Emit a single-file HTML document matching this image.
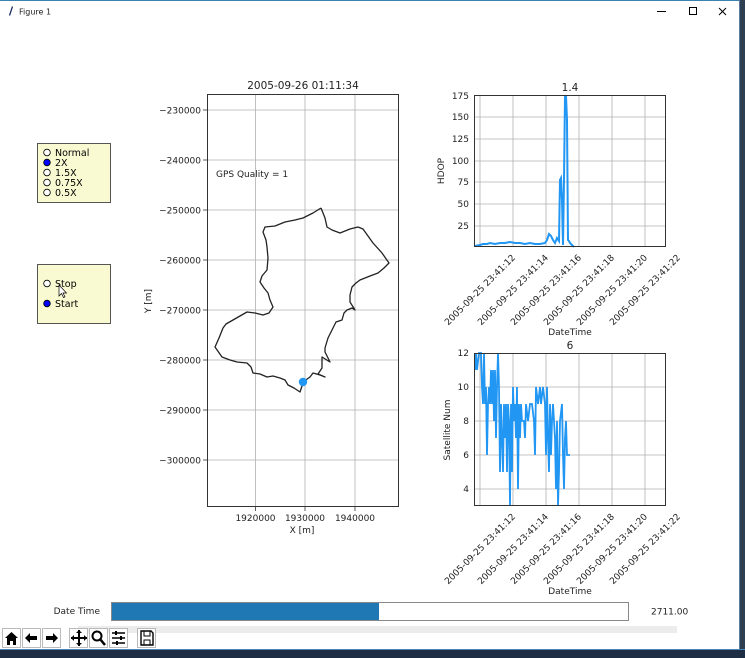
<!DOCTYPE html>
<html><head><meta charset="utf-8"><style>
html,body{margin:0;padding:0;background:#fff;width:745px;height:658px;overflow:hidden;font-family:"DejaVu Sans","Liberation Sans",sans-serif}
svg{position:absolute;left:0;top:0}
</style></head><body>
<svg width="745" height="658" viewBox="0 0 745 658" font-family="DejaVu Sans, Liberation Sans, sans-serif">
<rect x="0" y="0" width="745" height="658" fill="#fff"/>
<rect x="0" y="0" width="745" height="1" fill="#3c7fb1"/>
<rect x="739" y="0" width="6" height="658" fill="#2e3f52"/>
<rect x="739" y="0" width="1" height="658" fill="#5a7da0"/>
<rect x="0" y="649" width="745" height="9" fill="#1c2d44"/>
<rect x="0" y="649" width="745" height="1" fill="#4f86b8"/>
<path d="M9 15 L12 6 L13 7 L10 16 Z" fill="#1a2a60"/>
<text x="19" y="14.5" font-size="8" fill="#222">Figure 1</text>
<rect x="657" y="11" width="9" height="1" fill="#000"/>
<rect x="689.5" y="7.5" width="7" height="7" fill="none" stroke="#000" stroke-width="1"/>
<path d="M719 8 L726 15 M726 8 L719 15" stroke="#000" stroke-width="1"/>

<g font-size="9.5" fill="#000">
<rect x="37.5" y="143.5" width="73" height="59" fill="#fafad2" stroke="#555"/>
<circle cx="47" cy="152.5" r="3.3" fill="#fff" stroke="#000" stroke-width=".8"/><text x="55" y="156">Normal</text>
<circle cx="47" cy="162.5" r="3.3" fill="#0000ff" stroke="#000" stroke-width=".8"/><text x="55" y="166">2X</text>
<circle cx="47" cy="172.5" r="3.3" fill="#fff" stroke="#000" stroke-width=".8"/><text x="55" y="176">1.5X</text>
<circle cx="47" cy="182.5" r="3.3" fill="#fff" stroke="#000" stroke-width=".8"/><text x="55" y="186">0.75X</text>
<circle cx="47" cy="192.5" r="3.3" fill="#fff" stroke="#000" stroke-width=".8"/><text x="55" y="196">0.5X</text>
<rect x="37.5" y="264.5" width="73" height="59" fill="#fafad2" stroke="#555"/>
<circle cx="47" cy="283.5" r="3.3" fill="#fff" stroke="#000" stroke-width=".8"/><text x="55" y="287">Stop</text>
<circle cx="47" cy="303.5" r="3.3" fill="#0000ff" stroke="#000" stroke-width=".8"/><text x="55" y="307">Start</text>
<path d="M59 285 L59 296 L61.5 293.5 L63.5 297.5 L65 296.8 L63 293 L66.5 293 Z" fill="#fff" stroke="#000" stroke-width=".7"/>
</g>

<g stroke="#b0b0b0" stroke-width=".8">
<line x1="207" y1="110" x2="399" y2="110"/><line x1="207" y1="160" x2="399" y2="160"/>
<line x1="207" y1="210" x2="399" y2="210"/><line x1="207" y1="260" x2="399" y2="260"/>
<line x1="207" y1="310" x2="399" y2="310"/><line x1="207" y1="360" x2="399" y2="360"/>
<line x1="207" y1="410" x2="399" y2="410"/><line x1="207" y1="460" x2="399" y2="460"/>
<line x1="255.5" y1="94" x2="255.5" y2="507"/><line x1="305" y1="94" x2="305" y2="507"/><line x1="355" y1="94" x2="355" y2="507"/>
</g>
<rect x="207.5" y="94.5" width="191" height="412" fill="none" stroke="#333" stroke-width="1"/>
<g stroke="#333" stroke-width=".8">
<line x1="203" y1="110" x2="207" y2="110"/><line x1="203" y1="160" x2="207" y2="160"/><line x1="203" y1="210" x2="207" y2="210"/><line x1="203" y1="260" x2="207" y2="260"/><line x1="203" y1="310" x2="207" y2="310"/><line x1="203" y1="360" x2="207" y2="360"/><line x1="203" y1="410" x2="207" y2="410"/><line x1="203" y1="460" x2="207" y2="460"/>
<line x1="255.5" y1="507" x2="255.5" y2="511"/><line x1="305" y1="507" x2="305" y2="511"/><line x1="355" y1="507" x2="355" y2="511"/>
</g>
<g font-size="9" fill="#222" text-anchor="end">
<text x="201" y="113.5">−230000</text><text x="201" y="163.5">−240000</text><text x="201" y="213.5">−250000</text><text x="201" y="263.5">−260000</text><text x="201" y="313.5">−270000</text><text x="201" y="363.5">−280000</text><text x="201" y="413.5">−290000</text><text x="201" y="463.5">−300000</text>
</g>
<g font-size="9" fill="#222" text-anchor="middle">
<text x="255.5" y="521">1920000</text><text x="305" y="521">1930000</text><text x="355" y="521">1940000</text>
<text x="302" y="533">X [m]</text>
<text x="303" y="89" font-size="10.5">2005-09-26 01:11:34</text>
</g>
<text x="0" y="0" font-size="9" fill="#222" text-anchor="middle" transform="translate(151,301) rotate(-90)">Y [m]</text>
<text x="216" y="177" font-size="9" fill="#222">GPS Quality = 1</text>
<polyline fill="none" stroke="#222" stroke-width="1.3" stroke-linejoin="round" points="321,208 313,213 303,218 295,220 285,222 275,226 265,227 263,232 266,240 267,247 268,258 267,270 262,276 260,282 264,288 268,293 270,300 273,307 269,313 263,315 255,313 247,312 240,316 233,320 226,324 223,328 219,338 215,347 222,357 230,360 237,362 247,363 251,367 253,373 260,374 267,377 273,376 280,378 285,380 288,385 294,388 300,392 302,386 303,382 310,377 313,373 320,375 325,377 318,374 322,368 322,357 330,362 325,352 325,348 328,338 333,328 336,322 342,320 344,313 347,310 352,308 355,310 350,302 350,295 352,287 356,283 360,280 370,276 378,273 384,268 389,263 382,253 373,243 368,236 363,229 358,227 350,229 340,233 332,230 327,227 325,218 321,208"/>
<circle cx="303" cy="382" r="4.2" fill="#2196f3"/>

<g stroke="#b0b0b0" stroke-width=".8">
<line x1="474" y1="117" x2="666" y2="117"/><line x1="474" y1="139" x2="666" y2="139"/><line x1="474" y1="161" x2="666" y2="161"/><line x1="474" y1="182" x2="666" y2="182"/><line x1="474" y1="204" x2="666" y2="204"/><line x1="474" y1="226" x2="666" y2="226"/>
<line x1="480" y1="95" x2="480" y2="247"/><line x1="513" y1="95" x2="513" y2="247"/><line x1="546" y1="95" x2="546" y2="247"/><line x1="579" y1="95" x2="579" y2="247"/><line x1="612" y1="95" x2="612" y2="247"/><line x1="645" y1="95" x2="645" y2="247"/>
</g>
<polyline fill="none" stroke="#2196f3" stroke-width="2" points="475,246 480,245 483,244 487,244 490,243 495,244 500,243 505,243 510,242 515,243 520,243 525,244 530,243 535,244 540,244 545,243 547,240 549,234 551,236 553,240 555,243 557,238 559,241 560,180 561,178 562,200 563,245 564,180 565,96 566,96 567,120 568,240 569,241 570,243 572,245 574,247"/>
<rect x="474.5" y="95.5" width="191" height="151" fill="none" stroke="#333"/>
<g font-size="9" fill="#222" text-anchor="end">
<text x="469" y="99">175</text><text x="469" y="120">150</text><text x="469" y="142">125</text><text x="469" y="164">100</text><text x="469" y="185">75</text><text x="469" y="207">50</text><text x="469" y="229">25</text>
</g>
<text x="0" y="0" font-size="9" fill="#222" text-anchor="middle" transform="translate(444,171) rotate(-90)">HDOP</text>
<text x="570" y="91" font-size="10.5" fill="#222" text-anchor="middle">1.4</text>
<g font-size="9" fill="#222" text-anchor="middle">
<text transform="translate(482,292) rotate(-45)">2005-09-25 23:41:12</text>
<text transform="translate(515,292) rotate(-45)">2005-09-25 23:41:14</text>
<text transform="translate(548,292) rotate(-45)">2005-09-25 23:41:16</text>
<text transform="translate(581,292) rotate(-45)">2005-09-25 23:41:18</text>
<text transform="translate(614,292) rotate(-45)">2005-09-25 23:41:20</text>
<text transform="translate(647,292) rotate(-45)">2005-09-25 23:41:22</text>
</g>
<text x="570" y="335" font-size="9" fill="#222" text-anchor="middle">DateTime</text>

<g stroke="#b0b0b0" stroke-width=".8">
<line x1="474" y1="387" x2="666" y2="387"/><line x1="474" y1="421" x2="666" y2="421"/><line x1="474" y1="455" x2="666" y2="455"/><line x1="474" y1="489" x2="666" y2="489"/>
<line x1="480" y1="353" x2="480" y2="506"/><line x1="513" y1="353" x2="513" y2="506"/><line x1="546" y1="353" x2="546" y2="506"/><line x1="579" y1="353" x2="579" y2="506"/><line x1="612" y1="353" x2="612" y2="506"/><line x1="645" y1="353" x2="645" y2="506"/>
</g>
<polyline fill="none" stroke="#2196f3" stroke-width="1.8" points="475,370 476,353 477,370 479,353 481,353 482,387 483,404 484,353 485,404 486,387 487,455 488,404 489,387 490,404 491,370 492,404 493,370 494,421 495,370 496,438 497,387 498,353 499,387 500,472 501,404 502,438 503,472 504,404 505,438 506,404 507,472 508,404 509,421 510,506 511,404 512,472 513,387 514,421 515,404 516,438 517,387 518,489 519,404 520,438 521,404 522,421 524,421 525,438 526,404 528,421 530,404 532,404 534,421 535,455 536,387 538,404 540,387 541,404 543,387 545,404 546,455 547,387 548,438 549,472 550,404 551,455 552,421 553,404 555,438 556,489 557,421 558,506 559,472 560,421 562,404 563,455 564,489 565,438 566,421 567,455 568,455 570,455"/>
<rect x="474.5" y="353.5" width="191" height="152" fill="none" stroke="#333"/>
<g font-size="9" fill="#222" text-anchor="end">
<text x="469" y="356">12</text><text x="469" y="390">10</text><text x="469" y="424">8</text><text x="469" y="458">6</text><text x="469" y="492">4</text>
</g>
<text x="0" y="0" font-size="9" fill="#222" text-anchor="middle" transform="translate(450,430) rotate(-90)">Satellite Num</text>
<text x="570" y="349" font-size="10.5" fill="#222" text-anchor="middle">6</text>
<g font-size="9" fill="#222" text-anchor="middle">
<text transform="translate(482,551) rotate(-45)">2005-09-25 23:41:12</text>
<text transform="translate(515,551) rotate(-45)">2005-09-25 23:41:14</text>
<text transform="translate(548,551) rotate(-45)">2005-09-25 23:41:16</text>
<text transform="translate(581,551) rotate(-45)">2005-09-25 23:41:18</text>
<text transform="translate(614,551) rotate(-45)">2005-09-25 23:41:20</text>
<text transform="translate(647,551) rotate(-45)">2005-09-25 23:41:22</text>
</g>
<text x="570" y="594" font-size="9" fill="#222" text-anchor="middle">DateTime</text>

<text x="100" y="614" font-size="9" fill="#222" text-anchor="end">Date Time</text>
<rect x="111.5" y="602.5" width="517" height="18" fill="#fff" stroke="#888"/>
<rect x="112" y="603" width="267" height="17" fill="#1f77b4"/>
<text x="651" y="614.5" font-size="9" fill="#222">2711.00</text>
<rect x="78" y="626" width="599" height="7" fill="#ececec"/>

<g fill="#fff" stroke="#aaa" stroke-width=".8">
<rect x="2.5" y="628.5" width="18" height="19"/><rect x="22.5" y="628.5" width="18" height="19"/><rect x="42.5" y="628.5" width="18" height="19"/>
<rect x="69.5" y="628.5" width="18" height="19"/><rect x="89.5" y="628.5" width="18" height="19"/><rect x="109.5" y="628.5" width="18" height="19"/>
<rect x="137.5" y="628.5" width="18" height="19"/>
</g>
<g fill="#000" stroke="#000">
<path d="M5 638 L11.5 632 L18 638 L16 638 L16 645 L13 645 L13 641 L10 641 L10 645 L7 645 L7 638 Z" stroke="none"/>
<path d="M25 638 L30 633 L30 636 L37 636 L37 640 L30 640 L30 643 Z" stroke="none"/>
<path d="M58 638 L53 633 L53 636 L46 636 L46 640 L53 640 L53 643 Z" stroke="none"/>
<path d="M79 630 L79 646 M71 638 L87 638" stroke-width="2" fill="none"/>
<path d="M79 630 L76 633 L82 633 Z M79 646 L76 643 L82 643 Z M71 638 L74 635 L74 641 Z M87 638 L84 635 L84 641 Z" stroke="none"/>
<circle cx="97" cy="636" r="4.5" fill="none" stroke-width="2"/>
<path d="M100 639 L105 645" stroke-width="2.5"/>
<path d="M112 633 L125 633 M112 638 L125 638 M112 643 L125 643" stroke-width="1.4"/>
<rect x="115" y="631" width="2" height="4" stroke="none"/><rect x="120" y="636" width="2" height="4" stroke="none"/><rect x="116" y="641" width="2" height="4" stroke="none"/>
<path d="M141 631 L151 631 L153 633 L153 645 L141 645 Z" fill="none" stroke-width="1.4"/>
<rect x="144" y="631" width="6" height="5" fill="none" stroke-width="1"/>
<rect x="144" y="640" width="6" height="5" fill="none" stroke-width="1"/>
</g>
</svg>
</body></html>
